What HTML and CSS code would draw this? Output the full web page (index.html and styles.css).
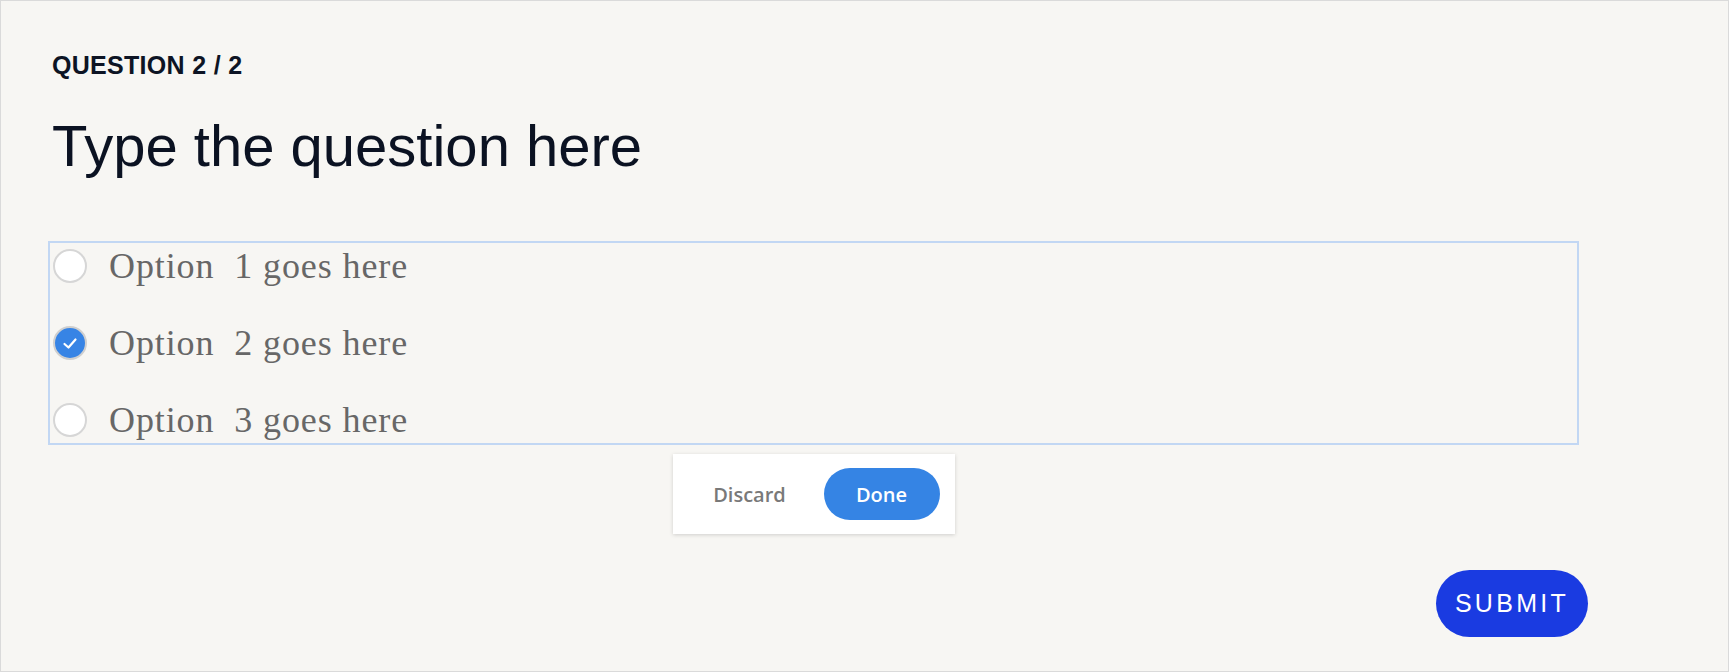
FILE: index.html
```html
<!DOCTYPE html>
<html lang="en">
<head>
<meta charset="utf-8">
<title>Quiz question</title>
<link rel="stylesheet" href="styles.css">
</head>
<body>
<div class="page">
  <p class="eyebrow">QUESTION 2 / 2</p>
  <h1 class="title">Type the question here</h1>
  <div class="options">
    <div class="option">
      <span class="radio"></span>
      <span class="label">Option&nbsp; 1 goes here</span>
    </div>
    <div class="option">
      <span class="radio checked">
        <svg width="16" height="13" viewBox="0 0 16 13"><path d="M2.5 7 L6.5 10.5 L13.5 2.5" fill="none" stroke="#fff" stroke-width="2.2" stroke-linecap="round" stroke-linejoin="round"/></svg>
      </span>
      <span class="label">Option&nbsp; 2 goes here</span>
    </div>
    <div class="option">
      <span class="radio"></span>
      <span class="label">Option&nbsp; 3 goes here</span>
    </div>
  </div>
  <div class="edit-bar">
    <div class="popup">
      <button class="btn-discard">Discard</button>
      <button class="btn-done">Done</button>
    </div>
  </div>
  <div class="actions">
    <button class="submit">SUBMIT</button>
  </div>
</div>
</body>
</html>
```
FILE: styles.css
```css
html, body {
  margin: 0;
  padding: 0;
}

body {
  background: #f7f6f3;
}

.page {
  box-sizing: border-box;
  width: 1729px;
  height: 672px;
  border: 1px solid #dadada;
  background: #f7f6f3;
  padding: 50px 0 0 47px;
  overflow: hidden;
}

.eyebrow {
  margin: 0;
  padding-left: 4px;
  font-family: "Liberation Sans", Arial, sans-serif;
  font-weight: 700;
  font-size: 25px;
  line-height: 28px;
  letter-spacing: 0.3px;
  color: #0d1424;
}

.title {
  margin: 34px 0 0;
  padding-left: 4px;
  font-family: "Liberation Sans", Arial, sans-serif;
  font-weight: 400;
  font-size: 58px;
  line-height: 66px;
  color: #0b1222;
}

.options {
  box-sizing: border-box;
  width: 1531px;
  margin-top: 62px;
  border: 2px solid #c2d7f3;
  padding: 0 3px;
  display: flex;
  flex-direction: column;
  gap: 31px;
}

.option {
  display: flex;
  align-items: center;
  gap: 22px;
  height: 46px;
  font-family: "Liberation Serif", "Times New Roman", serif;
  font-size: 36px;
  letter-spacing: 0.9px;
  color: #676767;
}

.label {
  line-height: 46px;
  white-space: nowrap;
}

.radio {
  box-sizing: border-box;
  flex: none;
  width: 34px;
  height: 34px;
  border-radius: 50%;
  border: 2.5px solid #d6d6d6;
  background: #ffffff;
}

.radio.checked {
  background: #3784e5;
  border-color: #cfcfcf;
  display: flex;
  align-items: center;
  justify-content: center;
}

.edit-bar {
  width: 1531px;
  display: flex;
  justify-content: center;
  margin-top: 9px;
}

.popup {
  display: flex;
  align-items: center;
  gap: 16px;
  padding: 14px 15px 14px 19px;
  background: #ffffff;
  box-shadow: 0 1px 4px rgba(0, 0, 0, 0.16);
}

.btn-discard,
.btn-done {
  width: 116px;
  height: 52px;
  border: 0;
  border-radius: 26px;
  font-family: "Open Sans", "Noto Sans", sans-serif;
  font-weight: 600;
  font-size: 20px;
  padding: 0;
  cursor: pointer;
}

.btn-discard {
  background: transparent;
  color: #797979;
}

.btn-done {
  background: #3584e4;
  color: #ffffff;
}

.actions {
  width: 1540px;
  display: flex;
  justify-content: flex-end;
  margin-top: 36px;
}

.submit {
  width: 152px;
  height: 67px;
  border: 0;
  border-radius: 34px;
  background: #1a3be1;
  color: #ffffff;
  font-family: "Liberation Sans", Arial, sans-serif;
  font-size: 25px;
  letter-spacing: 3.3px;
  padding: 0;
  cursor: pointer;
}
```
